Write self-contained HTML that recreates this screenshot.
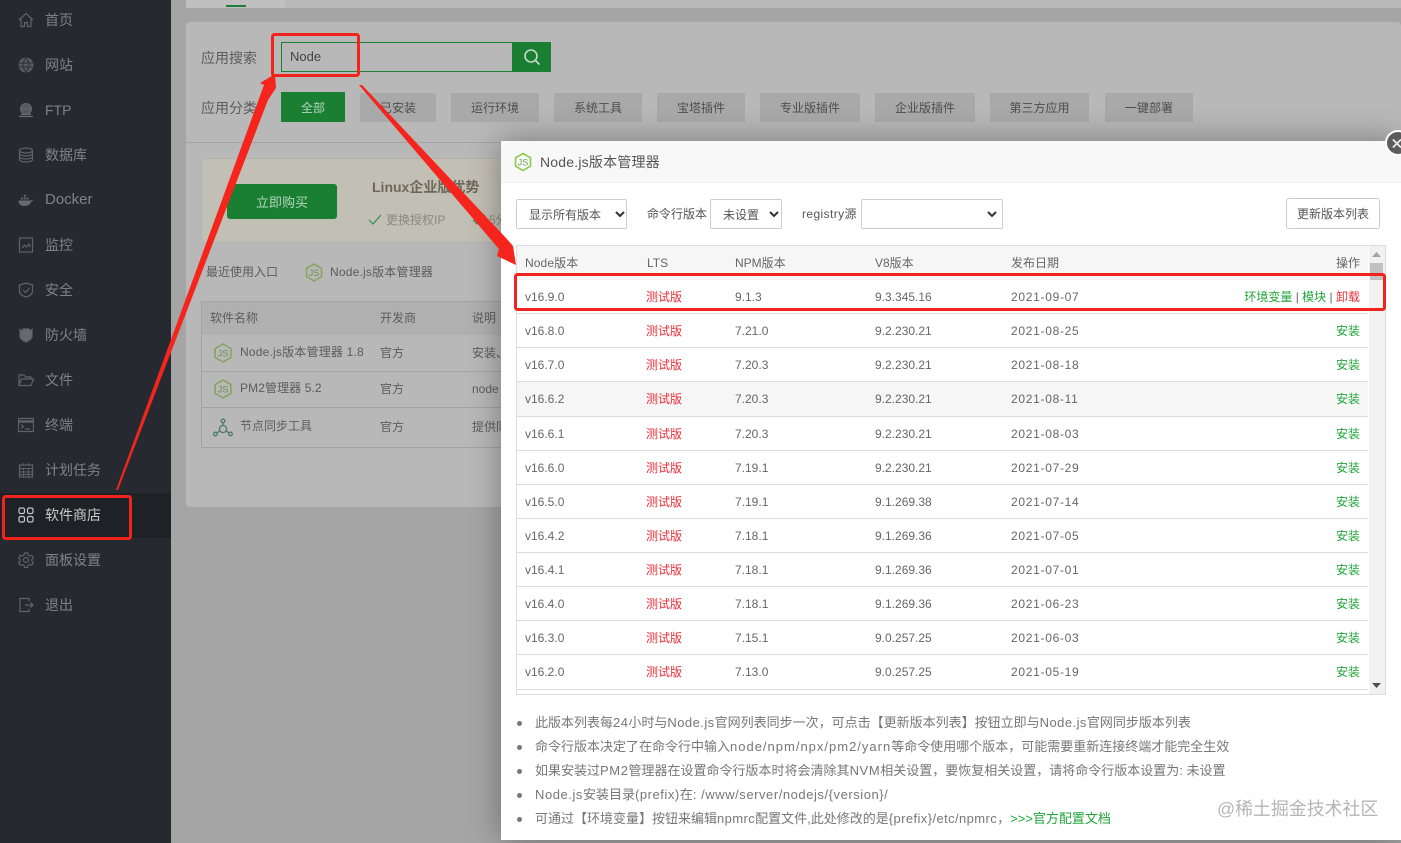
<!DOCTYPE html>
<html lang="zh">
<head>
<meta charset="utf-8">
<title>Node.js版本管理器</title>
<style>
html,body{margin:0;padding:0;width:1401px;height:843px;overflow:hidden;background:#a5a5a5}
body{position:relative;font-family:"Liberation Sans","Noto Sans CJK SC",sans-serif;font-size:12px;color:#666}
.a{position:absolute}
.t{position:absolute;white-space:nowrap;line-height:20px;height:20px;margin-top:1px}
#side{left:0;top:0;width:171px;height:843px;background:#262a30}
.n{position:absolute;left:45px;font-size:14px;line-height:20px;color:#7f8285;white-space:nowrap;margin-top:1px}
.i{position:absolute;left:18px;width:16px;height:16px;fill:none;stroke:#5f6367;stroke-width:1.2}
.cat{position:absolute;top:93px;height:29px;line-height:31px;text-align:center;background:#a9a9a9;color:#4e4e4e;font-size:12px}
.g{color:#5c5c5c}
.sel{position:absolute;background:#fff;border:1px solid #ccc;border-radius:2px;box-sizing:border-box;color:#555;font-size:12px;line-height:30px}
.sel svg{position:absolute;top:11px;width:10px;height:7px;fill:none;stroke:#333;stroke-width:2}
.rl{position:absolute;left:517px;width:851px;height:1px;background:#ddd}
.c{position:absolute;white-space:nowrap;font-size:12px;line-height:20px;color:#666;margin-top:1px}
.d{letter-spacing:.7px}
.red{color:#e8303a}.grn{color:#20a53a}
.li{position:absolute;left:535px;white-space:nowrap;font-size:13px;line-height:20px;color:#777;margin-top:1px}
.dot{position:absolute;left:517px;width:5px;height:5px;border-radius:50%;background:#777;margin-top:1px}
.js{position:absolute;overflow:visible}
</style>
</head>
<body>

<!-- sidebar -->
<div id="side" class="a"></div>
<div class="a" style="left:0;top:493px;width:171px;height:45px;background:#1e2125"></div>

<svg class="i" style="top:12px" viewBox="0 0 16 16"><path d="M1 8 8 1.5 15 8M3 7v7.5h3.5v-4h3v4H13V7"/></svg>
<div class="n" style="top:9px">首页</div>
<svg class="i" style="top:57px" viewBox="0 0 16 16"><circle cx="8" cy="8" r="6.8" fill="#55595d"/><path d="M1 6h14M1 10h14M8 1c-4 4-4 10 0 14M8 1c4 4 4 10 0 14" stroke="#33363b"/></svg>
<div class="n" style="top:54px">网站</div>
<svg class="i" style="top:102px" viewBox="0 0 16 16"><circle cx="8" cy="7" r="5.5" fill="#55595d"/><path d="M3 7h10M1 14.500h14M3 12.500h10" stroke="#666a6e"/></svg>
<div class="n" style="top:99px">FTP</div>
<svg class="i" style="top:147px" viewBox="0 0 16 16"><ellipse cx="8" cy="3.500" rx="6.500" ry="2.500"/><path d="M1.500 3.500v9c0 1.500 3 2.500 6.500 2.500s6.500-1 6.500-2.500v-9M1.500 6.500c0 1.500 3 2.500 6.500 2.500s6.500-1 6.500-2.500M1.500 9.500c0 1.500 3 2.500 6.500 2.500s6.500-1 6.500-2.500"/></svg>
<div class="n" style="top:144px">数据库</div>
<svg class="i" style="top:192px" viewBox="0 0 16 16"><path d="M.5 8.500h12c1 0 1.500-1 2.500-1 0 1-.5 1.500-1.500 2-1 3-4 4.500-7 4.500-4 0-6-2-6-5.500z" fill="#666a6e" stroke="none"/><path d="M3 5.500h2v2H3zM5.800 5.500h2v2h-2zM8.600 5.500h2v2h-2zM5.800 2.800h2v2h-2z" fill="#666a6e" stroke="none"/></svg>
<div class="n" style="top:189px;font-size:15px">Docker</div>
<svg class="i" style="top:237px" viewBox="0 0 16 16"><rect x="1.500" y="1" width="13" height="14"/><path d="M4 11l2.500-3 2 2L11 7l1 3"/></svg>
<div class="n" style="top:234px">监控</div>
<svg class="i" style="top:282px" viewBox="0 0 16 16"><path d="M8 1l6.500 2v6c0 3-3 5-6.500 6-3.500-1-6.500-3-6.500-6V3z"/><path d="M5 8l2.500 2.500L11.500 6"/></svg>
<div class="n" style="top:279px">安全</div>
<svg class="i" style="top:327px" viewBox="0 0 16 16"><path d="M2 2.500l2 1 2-2 2 1 2-1 2 2 2-1v7c0 2.500-2.500 4-6 5.500C4.500 13.500 2 12 2 9.500z" fill="#666a6e"/></svg>
<div class="n" style="top:324px">防火墙</div>
<svg class="i" style="top:372px" viewBox="0 0 16 16"><path d="M1 13.500V3h5l1.500 2H13v2M1 13.500L3.500 7H15.500L13 13.500z"/></svg>
<div class="n" style="top:369px">文件</div>
<svg class="i" style="top:417px" viewBox="0 0 16 16"><rect x=".5" y="1.500" width="15" height="13"/><path d="M.5 4.500h15" stroke-width="2.500"/><path d="M3 7.500l2.500 2L3 11.500M7 12h5"/></svg>
<div class="n" style="top:414px">终端</div>
<svg class="i" style="top:462px" viewBox="0 0 16 16"><rect x="1.500" y="3" width="13" height="12"/><path d="M1.500 6.500h13M5 1v3M11 1v3M1.500 10h13M1.500 12.500h13M5.500 6.500V15M10.500 6.500V15" stroke-width=".9"/></svg>
<div class="n" style="top:459px">计划任务</div>
<svg class="i" style="top:507px;stroke:#c3c4c5" viewBox="0 0 16 16"><rect x="1" y="1" width="5.500" height="5.500" rx="1.500"/><rect x="9.500" y="1" width="5.500" height="5.500" rx="1.500"/><rect x="1" y="9.500" width="5.500" height="5.500" rx="1.500"/><rect x="9.500" y="9.500" width="5.500" height="5.500" rx="1.500"/></svg>
<div class="n" style="top:504px;color:#c9cacb">软件商店</div>
<svg class="i" style="top:552px" viewBox="0 0 16 16"><circle cx="8" cy="8" r="2.500"/><path d="M6.500 1h3l.5 2 1.800 1 2-.6 1.500 2.600-1.500 1.500v1.500l1.500 1.500-1.500 2.600-2-.6-1.800 1-.5 2h-3l-.5-2-1.800-1-2 .6L.7 10.500 2.200 9V7.500L.7 6l1.500-2.600 2 .6L6 3z"/></svg>
<div class="n" style="top:549px">面板设置</div>
<svg class="i" style="top:597px" viewBox="0 0 16 16"><path d="M11 4V1.500H2v13h9V12M7 8h8M12.500 5.500L15 8l-2.500 2.500"/></svg>
<div class="n" style="top:594px">退出</div>

<!-- background content -->
<div class="a" style="left:186px;top:0;width:1215px;height:8px;background:#b9b9b9"></div>
<div class="a" style="left:186px;top:0;width:99px;height:8px;background:#c0c0c0"></div>
<div class="a" style="left:226px;top:5px;width:20px;height:2px;background:#1a7f33"></div>
<div class="a" style="left:186px;top:22px;width:1215px;height:485px;background:#b8b8b8;border-radius:4px"></div>
<div class="a" style="left:186px;top:142px;width:1215px;height:1px;background:#a3a3a3"></div>

<div class="t g" style="left:201px;top:47px;font-size:14px">应用搜索</div>
<div class="a" style="left:281px;top:42px;width:230px;height:28px;border:1px solid #1a7f33"></div>
<div class="t" style="left:290px;top:46px;font-size:13px;color:#444">Node</div>
<div class="a" style="left:512px;top:42px;width:39px;height:30px;background:#1a7f33"></div>
<svg class="a" style="left:523px;top:48px" width="18" height="18" viewBox="0 0 18 18" fill="none" stroke="#c5d9c9" stroke-width="1.600"><circle cx="8" cy="8" r="6"/><path d="M12.500 12.500l4 4"/></svg>

<div class="t g" style="left:201px;top:97px;font-size:14px">应用分类</div>
<div class="cat" style="left:281px;width:64px;background:#1a7f33;color:#b9d6bf;top:92px;height:30px;line-height:32px">全部</div>
<div class="cat" style="left:360px;width:76px">已安装</div>
<div class="cat" style="left:451px;width:88px">运行环境</div>
<div class="cat" style="left:554px;width:88px">系统工具</div>
<div class="cat" style="left:657px;width:88px">宝塔插件</div>
<div class="cat" style="left:760px;width:100px">专业版插件</div>
<div class="cat" style="left:875px;width:100px">企业版插件</div>
<div class="cat" style="left:990px;width:99px">第三方应用</div>
<div class="cat" style="left:1105px;width:88px">一键部署</div>

<div class="a" style="left:201px;top:158px;width:320px;height:85px;background:#c2bfb4;border:1px solid #b4b2a9;border-radius:3px;box-sizing:border-box"></div>
<div class="a" style="left:227px;top:184px;width:110px;height:35px;background:#1a7f33;border-radius:3px;color:#b4d3bb;font-size:13px;line-height:37px;text-align:center">立即购买</div>
<div class="t" style="left:372px;top:176px;font-size:14px;font-weight:bold;color:#6c675a">Linux企业版优势</div>
<svg class="a" style="left:368px;top:214px" width="14" height="12" viewBox="0 0 14 12" fill="none" stroke="#3b8a55" stroke-width="1.200"><path d="M1 6l4 4 8-9"/></svg>
<div class="t" style="left:386px;top:209px;color:#8b8a82">更换授权IP</div>
<svg class="a" style="left:472px;top:214px" width="14" height="12" viewBox="0 0 14 12" fill="none" stroke="#3b8a55" stroke-width="1.200"><path d="M1 6l4 4 8-9"/></svg>
<div class="t" style="left:489px;top:209px;color:#8b8a82">5分</div>

<div class="t g" style="left:206px;top:261px">最近使用入口</div>
<svg class="js" style="left:305px;top:263px" width="18" height="19" viewBox="0 0 18 19"><path d="M9 1l7.500 4.300v8.400L9 18l-7.500-4.300V5.300z" fill="none" stroke="#86a563" stroke-width="1.600"/><text x="9" y="13" font-size="9" fill="#6f8f50" text-anchor="middle">JS</text></svg>
<div class="t g" style="left:330px;top:261px;letter-spacing:.2px">Node.js版本管理器</div>

<div class="a" style="left:201px;top:301px;width:320px;height:147px;border:1px solid #a3a3a3;box-sizing:border-box"></div>
<div class="a" style="left:202px;top:302px;width:319px;height:33px;background:#b0b0b0"></div>
<div class="a" style="left:202px;top:371px;width:319px;height:1px;background:#a3a3a3"></div>
<div class="a" style="left:202px;top:407px;width:319px;height:1px;background:#a3a3a3"></div>
<div class="t g" style="left:210px;top:307px">软件名称</div>
<div class="t g" style="left:380px;top:307px">开发商</div>
<div class="t g" style="left:472px;top:307px">说明</div>
<svg class="js" style="left:213px;top:343px" width="20" height="20" viewBox="0 0 18 19"><path d="M9 1l7.500 4.300v8.400L9 18l-7.500-4.300V5.300z" fill="none" stroke="#86a563" stroke-width="1.600"/><text x="9" y="13" font-size="9" fill="#6f8f50" text-anchor="middle">JS</text></svg>
<div class="t g" style="left:240px;top:341px;letter-spacing:.2px">Node.js版本管理器 1.8</div>
<div class="t g" style="left:380px;top:342px">官方</div>
<div class="t g" style="left:472px;top:342px">安装、</div>
<svg class="js" style="left:213px;top:379px" width="20" height="20" viewBox="0 0 18 19"><path d="M9 1l7.500 4.300v8.400L9 18l-7.500-4.300V5.300z" fill="none" stroke="#86a563" stroke-width="1.600"/><text x="9" y="13" font-size="9" fill="#6f8f50" text-anchor="middle">JS</text></svg>
<div class="t g" style="left:240px;top:377px;letter-spacing:.1px">PM2管理器 5.2</div>
<div class="t g" style="left:380px;top:378px">官方</div>
<div class="t g" style="left:472px;top:378px">node</div>
<svg class="a" style="left:213px;top:418px" width="20" height="19" viewBox="0 0 20 19" fill="none" stroke="#4f7a63" stroke-width="1.300"><circle cx="10" cy="3" r="1.800"/><circle cx="10" cy="11" r="3.600"/><circle cx="2.500" cy="16" r="1.800"/><circle cx="17.500" cy="16" r="1.800"/><path d="M10 5v2.500M4 15l3-2.200M16 15l-3-2.200"/></svg>
<div class="t g" style="left:240px;top:415px">节点同步工具</div>
<div class="t g" style="left:380px;top:416px">官方</div>
<div class="t g" style="left:472px;top:416px">提供同</div>

<!-- modal -->
<div class="a" style="left:501px;top:141px;width:900px;height:699px;background:#fff;box-shadow:0 0 30px rgba(0,0,0,.35)"></div>
<div class="a" style="left:501px;top:141px;width:900px;height:41px;background:#f8f8f8;border-bottom:1px solid #eee"></div>
<svg class="js" style="left:514px;top:152px" width="18" height="20" viewBox="0 0 18 19"><path d="M9 1l7.500 4.300v8.400L9 18l-7.500-4.300V5.300z" fill="none" stroke="#8cc84b" stroke-width="1.600"/><text x="9" y="13" font-size="9" fill="#6aa84f" text-anchor="middle">JS</text></svg>
<div class="t" style="left:540px;top:151px;font-size:14px;color:#555;letter-spacing:.2px">Node.js版本管理器</div>
<div class="a" style="left:1385px;top:130px;width:26px;height:26px;border-radius:50%;background:#5c5c5c;border:2px solid #fff;box-sizing:border-box"></div>
<svg class="a" style="left:1392px;top:138px" width="9" height="11" viewBox="0 0 10 12" fill="none" stroke="#e8e8e8" stroke-width="2"><path d="M1 1.500l9 9M10 1.500l-9 9"/></svg>

<div class="sel" style="left:516px;top:199px;width:111px;height:30px;padding-left:12px">显示所有版本<svg style="left:98px" viewBox="0 0 10 7"><path d="M1 1l4 4 4-4"/></svg></div>
<div class="t" style="left:647px;top:203px;color:#555">命令行版本</div>
<div class="sel" style="left:710px;top:199px;width:72px;height:30px;padding-left:12px">未设置<svg style="left:58px" viewBox="0 0 10 7"><path d="M1 1l4 4 4-4"/></svg></div>
<div class="t" style="left:802px;top:203px;color:#555;letter-spacing:.4px">registry源</div>
<div class="sel" style="left:861px;top:199px;width:142px;height:30px"><svg style="left:125px" viewBox="0 0 10 7"><path d="M1 1l4 4 4-4"/></svg></div>
<div class="sel" style="left:1286px;top:198px;width:94px;height:31px;text-align:center;border-radius:3px">更新版本列表</div>

<!-- table -->
<div class="a" style="left:516px;top:245px;width:870px;height:450px;border:1px solid #ddd;box-sizing:border-box"></div>
<div class="a" style="left:517px;top:246px;width:851px;height:34px;background:#f6f6f6"></div>
<div class="a" style="left:1369px;top:246px;width:16px;height:448px;background:#f1f1f1"></div>
<div class="a" style="left:1370px;top:263px;width:13px;height:17px;background:#c1c1c1"></div>
<svg class="a" style="left:1372px;top:252px" width="9" height="5"><path d="M0 5L4.500 0 9 5z" fill="#a3a3a3"/></svg>
<svg class="a" style="left:1372px;top:683px" width="9" height="5"><path d="M0 0L4.500 5 9 0z" fill="#505050"/></svg>

<div class="c" style="left:525px;top:252px;letter-spacing:.1px">Node版本</div>
<div class="c" style="left:647px;top:252px">LTS</div>
<div class="c" style="left:735px;top:252px">NPM版本</div>
<div class="c" style="left:875px;top:252px">V8版本</div>
<div class="c" style="left:1011px;top:252px">发布日期</div>
<div class="c" style="left:1336px;top:252px">操作</div>

<div class="a" style="left:517px;top:382px;width:851px;height:34px;background:#f6f6f6"></div>
<div class="rl" style="top:313px"></div><div class="rl" style="top:347px"></div><div class="rl" style="top:381px"></div><div class="rl" style="top:416px"></div><div class="rl" style="top:450px"></div><div class="rl" style="top:484px"></div><div class="rl" style="top:518px"></div><div class="rl" style="top:552px"></div><div class="rl" style="top:586px"></div><div class="rl" style="top:620px"></div><div class="rl" style="top:654px"></div><div class="rl" style="top:689px"></div>

<div class="c" style="left:525px;top:286px">v16.9.0</div><div class="c red" style="left:646px;top:286px">测试版</div><div class="c" style="left:735px;top:286px">9.1.3</div><div class="c" style="left:875px;top:286px">9.3.345.16</div><div class="c d" style="left:1011px;top:286px">2021-09-07</div>
<div class="c" style="right:41px;top:286px"><span class="grn">环境变量</span> | <span class="grn">模块</span> | <span class="red">卸载</span></div>

<div class="c" style="left:525px;top:320px">v16.8.0</div><div class="c red" style="left:646px;top:320px">测试版</div><div class="c" style="left:735px;top:320px">7.21.0</div><div class="c" style="left:875px;top:320px">9.2.230.21</div><div class="c d" style="left:1011px;top:320px">2021-08-25</div><div class="c grn" style="left:1336px;top:320px">安装</div>

<div class="c" style="left:525px;top:354px">v16.7.0</div><div class="c red" style="left:646px;top:354px">测试版</div><div class="c" style="left:735px;top:354px">7.20.3</div><div class="c" style="left:875px;top:354px">9.2.230.21</div><div class="c d" style="left:1011px;top:354px">2021-08-18</div><div class="c grn" style="left:1336px;top:354px">安装</div>

<div class="c" style="left:525px;top:388px">v16.6.2</div><div class="c red" style="left:646px;top:388px">测试版</div><div class="c" style="left:735px;top:388px">7.20.3</div><div class="c" style="left:875px;top:388px">9.2.230.21</div><div class="c d" style="left:1011px;top:388px">2021-08-11</div><div class="c grn" style="left:1336px;top:388px">安装</div>

<div class="c" style="left:525px;top:423px">v16.6.1</div><div class="c red" style="left:646px;top:423px">测试版</div><div class="c" style="left:735px;top:423px">7.20.3</div><div class="c" style="left:875px;top:423px">9.2.230.21</div><div class="c d" style="left:1011px;top:423px">2021-08-03</div><div class="c grn" style="left:1336px;top:423px">安装</div>

<div class="c" style="left:525px;top:457px">v16.6.0</div><div class="c red" style="left:646px;top:457px">测试版</div><div class="c" style="left:735px;top:457px">7.19.1</div><div class="c" style="left:875px;top:457px">9.2.230.21</div><div class="c d" style="left:1011px;top:457px">2021-07-29</div><div class="c grn" style="left:1336px;top:457px">安装</div>

<div class="c" style="left:525px;top:491px">v16.5.0</div><div class="c red" style="left:646px;top:491px">测试版</div><div class="c" style="left:735px;top:491px">7.19.1</div><div class="c" style="left:875px;top:491px">9.1.269.38</div><div class="c d" style="left:1011px;top:491px">2021-07-14</div><div class="c grn" style="left:1336px;top:491px">安装</div>

<div class="c" style="left:525px;top:525px">v16.4.2</div><div class="c red" style="left:646px;top:525px">测试版</div><div class="c" style="left:735px;top:525px">7.18.1</div><div class="c" style="left:875px;top:525px">9.1.269.36</div><div class="c d" style="left:1011px;top:525px">2021-07-05</div><div class="c grn" style="left:1336px;top:525px">安装</div>

<div class="c" style="left:525px;top:559px">v16.4.1</div><div class="c red" style="left:646px;top:559px">测试版</div><div class="c" style="left:735px;top:559px">7.18.1</div><div class="c" style="left:875px;top:559px">9.1.269.36</div><div class="c d" style="left:1011px;top:559px">2021-07-01</div><div class="c grn" style="left:1336px;top:559px">安装</div>

<div class="c" style="left:525px;top:593px">v16.4.0</div><div class="c red" style="left:646px;top:593px">测试版</div><div class="c" style="left:735px;top:593px">7.18.1</div><div class="c" style="left:875px;top:593px">9.1.269.36</div><div class="c d" style="left:1011px;top:593px">2021-06-23</div><div class="c grn" style="left:1336px;top:593px">安装</div>

<div class="c" style="left:525px;top:627px">v16.3.0</div><div class="c red" style="left:646px;top:627px">测试版</div><div class="c" style="left:735px;top:627px">7.15.1</div><div class="c" style="left:875px;top:627px">9.0.257.25</div><div class="c d" style="left:1011px;top:627px">2021-06-03</div><div class="c grn" style="left:1336px;top:627px">安装</div>

<div class="c" style="left:525px;top:661px">v16.2.0</div><div class="c red" style="left:646px;top:661px">测试版</div><div class="c" style="left:735px;top:661px">7.13.0</div><div class="c" style="left:875px;top:661px">9.0.257.25</div><div class="c d" style="left:1011px;top:661px">2021-05-19</div><div class="c grn" style="left:1336px;top:661px">安装</div>

<!-- notes -->
<div class="dot" style="top:720px"></div><div class="li" style="top:712px">此版本列表每<span style="letter-spacing:.45px">24</span>小时与<span style="letter-spacing:.45px">Node.js</span>官网列表同步一次，可点击【更新版本列表】按钮立即与<span style="letter-spacing:.45px">Node.js</span>官网同步版本列表</div>
<div class="dot" style="top:744px"></div><div class="li" style="top:736px">命令行版本决定了在命令行中输入<span style="letter-spacing:1px">node/npm/npx/pm2/yarn</span>等命令使用哪个版本，可能需要重新连接终端才能完全生效</div>
<div class="dot" style="top:768px"></div><div class="li" style="top:760px">如果安装过<span style="letter-spacing:.6px">PM2</span>管理器在设置命令行版本时将会清除其<span style="letter-spacing:.6px">NVM</span>相关设置，要恢复相关设置，请将命令行版本设置为: 未设置</div>
<div class="dot" style="top:792px"></div><div class="li" style="top:784px;letter-spacing:.55px">Node.js<span style="letter-spacing:0">安装目录</span>(prefix)<span style="letter-spacing:0">在</span>: /www/server/nodejs/{version}/</div>
<div class="dot" style="top:816px"></div><div class="li" style="top:808px">可通过【环境变量】按钮来编辑<span style="letter-spacing:.4px">npmrc</span>配置文件,此处修改的是<span style="letter-spacing:.4px">{prefix}/etc/npmrc</span>，<span class="grn">&gt;&gt;&gt;官方配置文档</span></div>

<div class="t" style="left:1217px;top:798px;font-size:17.900px;color:#b5b5b5">@稀土掘金技术社区</div>

<!-- annotations -->
<svg class="a" style="left:0;top:0" width="1401" height="843" viewBox="0 0 1401 843">
<g fill="#f5241c">
<path d="M275 74L260 83 264 85 116 490 118 490 268 100 276 88z"/>
<path d="M359 85L362 85 506 238 513 246 516 265 497 256 499 249z"/>
</g>
<g fill="none" stroke="#f0241c" stroke-width="3">
<rect x="272.500" y="34.500" width="86" height="41" rx="2"/>
<rect x="515.500" y="274.500" width="869" height="35" rx="2"/>
<rect x="3.500" y="496.500" width="127" height="42" rx="2"/>
</g>
</svg>

</body>
</html>
